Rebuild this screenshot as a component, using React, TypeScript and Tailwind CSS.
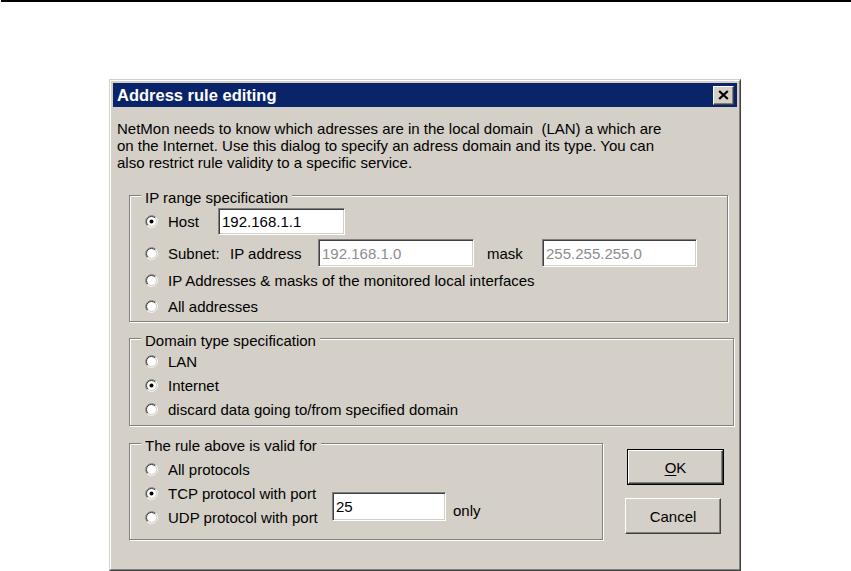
import type { ReactNode } from 'react';

function Radio({ checked = false }: { checked?: boolean }) {
  return (
    <svg width="13" height="13" viewBox="0 0 13 13" className="shrink-0">
      <circle cx="6.5" cy="6.5" r="4.8" fill="#ffffff" />
      <path d="M2.26 10.74 A6 6 0 0 1 10.74 2.26" stroke="#808080" fill="none" />
      <path d="M10.74 2.26 A6 6 0 0 1 2.26 10.74" stroke="#ffffff" fill="none" />
      <path d="M2.96 10.04 A5 5 0 0 1 10.04 2.96" stroke="#404040" fill="none" />
      <path d="M10.04 2.96 A5 5 0 0 1 2.96 10.04" stroke="#d4d0c8" fill="none" />
      {checked && <circle cx="6.5" cy="6.5" r="2" fill="#000000" />}
    </svg>
  );
}

function Field({ value, className, muted = false }: { value: string; className: string; muted?: boolean }) {
  return (
    <div
      className={`flex shrink-0 items-center border border-t-[#808080] border-l-[#808080] border-b-white border-r-white bg-white px-[3px] shadow-[inset_1px_1px_0_#404040,inset_-1px_-1px_0_#d4d0c8] ${className} ${
        muted ? 'text-[#8c8c8c]' : 'text-black'
      }`}
    >
      {value}
    </div>
  );
}

function Group({ title, className, children }: { title: string; className: string; children: ReactNode }) {
  return (
    <div className={`relative border border-[#808080] shadow-[1px_1px_0_#ffffff,inset_1px_1px_0_#ffffff] ${className}`}>
      <span className="absolute top-[-7px] left-[11px] bg-[#d4d0c8] px-[4px] leading-[17px]">{title}</span>
      {children}
    </div>
  );
}

function Option({ label, checked, className = 'h-[24px]' }: { label: string; checked?: boolean; className?: string }) {
  return (
    <div className={`flex items-center gap-[10px] ${className}`}>
      <Radio checked={checked} />
      <span>{label}</span>
    </div>
  );
}

export default function App() {
  return (
    <div className="min-h-[571px] bg-white text-[15px] leading-[17px] text-black [font-family:'Liberation_Sans',Arial,sans-serif]">
      <div className="ml-[1px] h-[2px] bg-black" />

      <div className="ml-[109px] mt-[77px] h-[492px] w-[632px] border border-t-[#d4d0c8] border-l-[#d4d0c8] border-b-[#404040] border-r-[#404040] bg-[#d4d0c8]">
        <div className="flex h-full flex-col border border-t-white border-l-white border-b-[#808080] border-r-[#808080] p-[2px]">
          <div className="flex h-[24px] items-center justify-between bg-[#0a246a] pl-[4px] pr-[3px]">
            <span className="text-[16.5px] font-bold text-white">Address rule editing</span>
            <button className="flex h-[19px] w-[21px] items-center justify-center border border-t-white border-l-white border-b-[#404040] border-r-[#404040] bg-[#d4d0c8] shadow-[inset_-1px_-1px_0_#808080]">
              <svg width="11" height="10" viewBox="0 0 11 10">
                <path d="M1.2 1 L9.8 9 M9.8 1 L1.2 9" stroke="#000000" strokeWidth="2.2" />
              </svg>
            </button>
          </div>

          <p className="ml-[4px] mt-[13px] w-[560px] whitespace-pre-line">
            {'NetMon needs to know which adresses are in the local domain\u00a0 (LAN) a which are\non the Internet. Use this dialog to specify an adress domain and its type. You can\nalso restrict rule validity to a specific service.'}
          </p>

          <Group title="IP range specification" className="ml-[16px] mt-[24px] w-[599px] pl-[15px] pt-[12px] pb-[2px]">
            <div className="flex h-[27px] items-center">
              <div className="flex w-[73px] items-center gap-[10px]">
                <Radio checked />
                <span>Host</span>
              </div>
              <Field value="192.168.1.1" className="h-[27px] w-[127px]" />
            </div>
            <div className="mt-[4px] flex h-[28px] items-center">
              <div className="flex w-[85px] items-center gap-[10px]">
                <Radio />
                <span>Subnet:</span>
              </div>
              <span className="w-[88px]">IP address</span>
              <Field value="192.168.1.0" muted className="h-[28px] w-[156px]" />
              <span className="ml-[13px] w-[55px]">mask</span>
              <Field value="255.255.255.0" muted className="h-[28px] w-[155px]" />
            </div>
            <Option label="IP Addresses & masks of the monitored local interfaces" className="h-[26px]" />
            <Option label="All addresses" className="h-[26px]" />
          </Group>

          <Group title="Domain type specification" className="ml-[16px] mt-[16px] w-[605px] pl-[15px] pt-[10px] pb-[3px]">
            <Option label="LAN" />
            <Option label="Internet" checked />
            <Option label="discard data going to/from specified domain" className="h-[25px]" />
          </Group>

          <div className="ml-[16px] mt-[17px] flex items-start">
            <Group title="The rule above is valid for" className="w-[474px] pl-[15px] pt-[13px] pb-[10px]">
              <Option label="All protocols" />
              <div className="flex items-start">
                <div className="w-[187px]">
                  <Option label="TCP protocol with port" checked />
                  <Option label="UDP protocol with port" />
                </div>
                <Field value="25" className="mt-[11px] h-[29px] w-[114px]" />
                <span className="ml-[7px] mt-[21px]">only</span>
              </div>
            </Group>

            <div className="ml-[24px] mt-[6px] flex flex-col">
              <button className="h-[36px] w-[97px] border border-black bg-[#d4d0c8]">
                <div className="flex h-full items-center justify-center border border-t-white border-l-white border-b-[#404040] border-r-[#404040] shadow-[inset_-1px_-1px_0_#808080]">
                  <span>
                    <span className="underline underline-offset-2">O</span>K
                  </span>
                </div>
              </button>
              <button className="mt-[13px] -ml-[2px] flex h-[36px] w-[96px] items-center justify-center border border-t-white border-l-white border-b-[#404040] border-r-[#404040] bg-[#d4d0c8] shadow-[inset_-1px_-1px_0_#808080]">
                Cancel
              </button>
            </div>
          </div>
        </div>
      </div>
    </div>
  );
}
